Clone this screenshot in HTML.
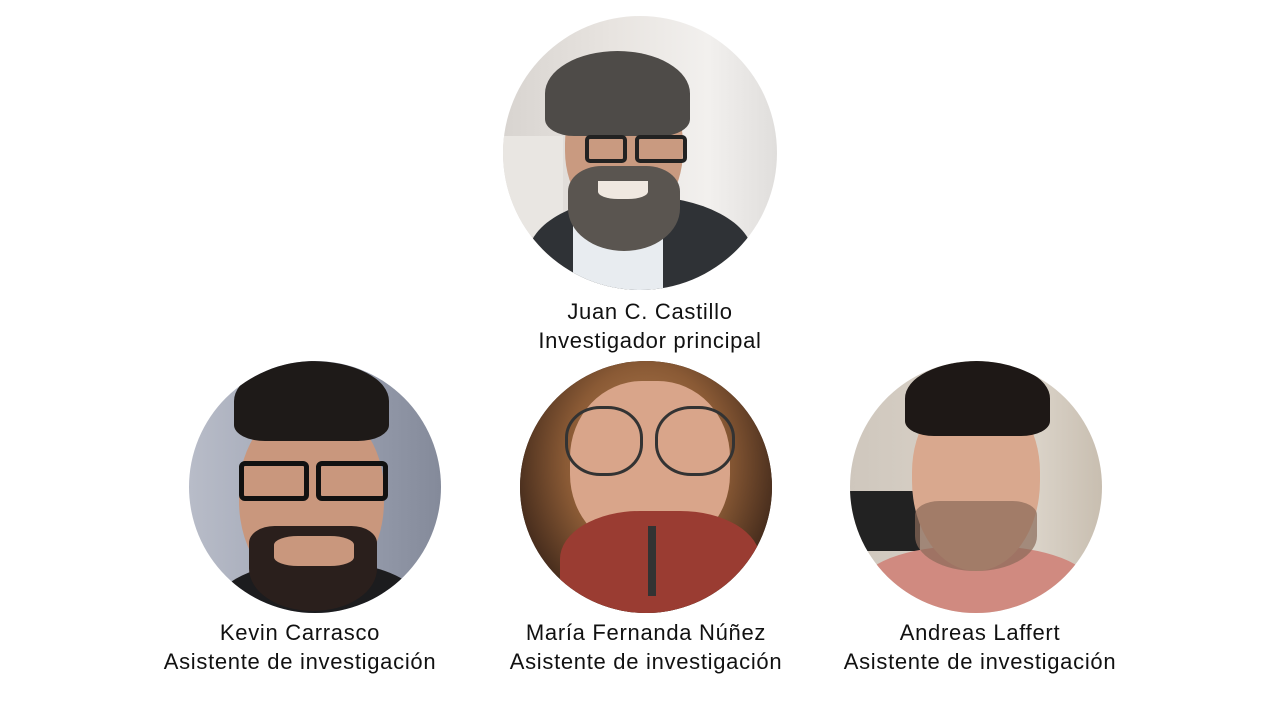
<!DOCTYPE html>
<html><head><meta charset="utf-8"><style>
html,body{margin:0;padding:0;background:#fff;width:1280px;height:720px;overflow:hidden}
.c{position:absolute;border-radius:50%;overflow:hidden}
.t{position:absolute;font-family:"Liberation Sans",sans-serif;font-size:22px;letter-spacing:0.7px;color:#111;text-align:center;line-height:29px;white-space:nowrap}
.l{position:absolute}
</style></head><body>

<!-- Juan -->
<div class="c" style="left:503px;top:16px;width:274px;height:274px;background:linear-gradient(90deg,#d8d4d0 0%,#e8e4e0 40%,#f2f0ee 75%,#e0dedc 100%)">
  <div class="l" style="left:0;top:120px;width:60px;height:100px;background:#e9e6e2"></div>
  <div class="l" style="left:25px;top:180px;width:225px;height:120px;border-radius:50% 50% 0 0;background:#2f3236"></div>
  <div class="l" style="left:70px;top:185px;width:90px;height:100px;background:#e8ecf0"></div>
  <div class="l" style="left:62px;top:60px;width:118px;height:150px;border-radius:45% 45% 50% 50%;background:#c99a80"></div>
  <div class="l" style="left:65px;top:150px;width:112px;height:85px;border-radius:30% 30% 50% 50%;background:#5a5550"></div>
  <div class="l" style="left:95px;top:165px;width:50px;height:18px;border-radius:0 0 40% 40%;background:#f0e8e0"></div>
  <div class="l" style="left:42px;top:35px;width:145px;height:85px;border-radius:50% 50% 20% 20%;background:#4e4b48"></div>
  <div class="l" style="left:82px;top:119px;width:42px;height:28px;border:4px solid #222;border-radius:5px;box-sizing:border-box"></div>
  <div class="l" style="left:132px;top:119px;width:52px;height:28px;border:4px solid #222;border-radius:5px;box-sizing:border-box"></div>
</div>
<div class="t" style="left:500px;top:297px;width:300px">Juan C. Castillo</div>
<div class="t" style="left:500px;top:326px;width:300px">Investigador principal</div>

<!-- Kevin -->
<div class="c" style="left:189px;top:361px;width:252px;height:252px;background:linear-gradient(90deg,#b8bcc8,#9aa0b0 60%,#848a9a)">
  <div class="l" style="left:30px;top:200px;width:200px;height:80px;border-radius:50% 50% 0 0;background:#1c1c1e"></div>
  <div class="l" style="left:50px;top:45px;width:145px;height:190px;border-radius:45% 45% 50% 50%;background:#c9977d"></div>
  <div class="l" style="left:60px;top:165px;width:128px;height:85px;border-radius:20% 20% 50% 50%;background:#2a1f1c"></div>
  <div class="l" style="left:85px;top:175px;width:80px;height:30px;border-radius:30%;background:#c9977d"></div>
  <div class="l" style="left:45px;top:0;width:155px;height:80px;border-radius:50% 50% 20% 20%;background:#1e1a18"></div>
  <div class="l" style="left:50px;top:100px;width:70px;height:40px;border:5px solid #111;border-radius:6px;box-sizing:border-box"></div>
  <div class="l" style="left:127px;top:100px;width:72px;height:40px;border:5px solid #111;border-radius:6px;box-sizing:border-box"></div>
</div>
<div class="t" style="left:150px;top:618px;width:300px">Kevin Carrasco</div>
<div class="t" style="left:150px;top:647px;width:300px">Asistente de investigación</div>

<!-- María -->
<div class="c" style="left:520px;top:361px;width:252px;height:252px;background:#3a2a1e">
  <div class="l" style="left:0;top:0;width:252px;height:252px;background:radial-gradient(ellipse at 50% 40%,#c08a5a 0%,#8a5a35 45%,#3a2418 80%)"></div>
  <div class="l" style="left:50px;top:20px;width:160px;height:170px;border-radius:45%;background:#d9a58a"></div>
  <div class="l" style="left:40px;top:150px;width:200px;height:120px;border-radius:40% 40% 0 0;background:#9a3c32"></div>
  <div class="l" style="left:128px;top:165px;width:8px;height:70px;background:#333"></div>
  <div class="l" style="left:45px;top:45px;width:78px;height:70px;border:3px solid #333;border-radius:45%;box-sizing:border-box"></div>
  <div class="l" style="left:135px;top:45px;width:80px;height:70px;border:3px solid #333;border-radius:45%;box-sizing:border-box"></div>
</div>
<div class="t" style="left:496px;top:618px;width:300px">María Fernanda Núñez</div>
<div class="t" style="left:496px;top:647px;width:300px">Asistente de investigación</div>

<!-- Andreas -->
<div class="c" style="left:850px;top:361px;width:252px;height:252px;background:linear-gradient(90deg,#cfc7bd,#ddd6cc 70%,#c8beb0)">
  <div class="l" style="left:0;top:130px;width:70px;height:60px;background:#222"></div>
  <div class="l" style="left:10px;top:185px;width:232px;height:90px;border-radius:45% 45% 0 0;background:#d08a80"></div>
  <div class="l" style="left:62px;top:30px;width:128px;height:180px;border-radius:45% 45% 50% 50%;background:#d9a88e"></div>
  <div class="l" style="left:65px;top:140px;width:122px;height:70px;border-radius:20% 20% 50% 50%;background:#8a6a58;opacity:.7"></div>
  <div class="l" style="left:55px;top:0;width:145px;height:75px;border-radius:50% 50% 20% 20%;background:#1e1816"></div>
</div>
<div class="t" style="left:830px;top:618px;width:300px">Andreas Laffert</div>
<div class="t" style="left:830px;top:647px;width:300px">Asistente de investigación</div>

</body></html>
